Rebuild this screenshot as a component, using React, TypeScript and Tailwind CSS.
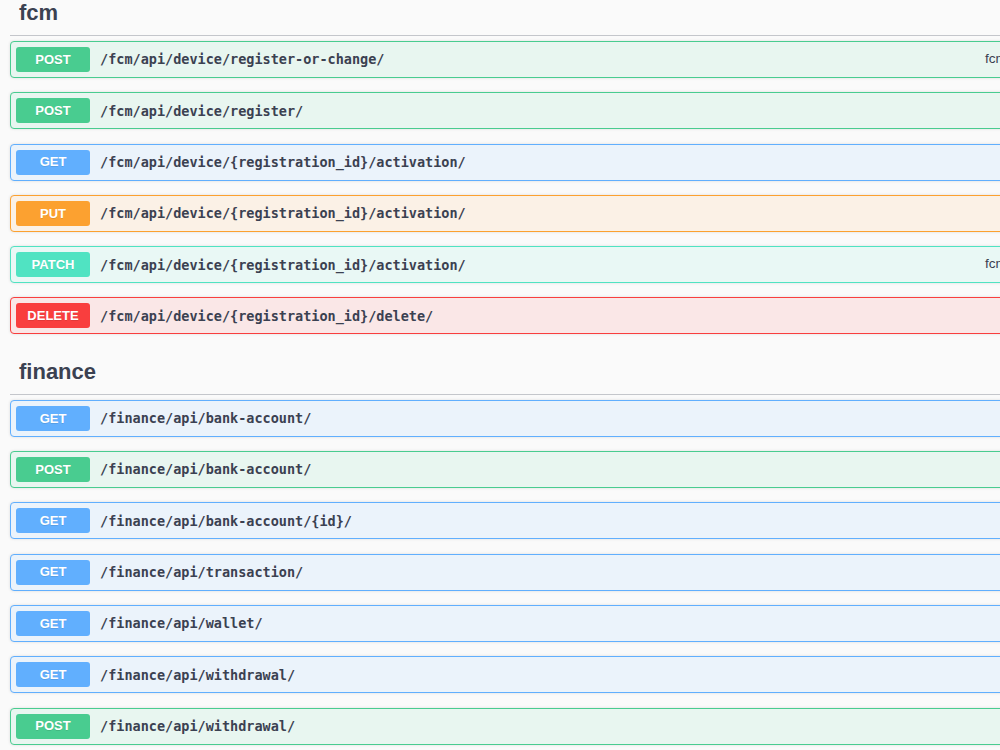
import React from "react";

type Method = "GET" | "POST" | "PUT" | "PATCH" | "DELETE";

type Op = {
  method: Method;
  path: string;
  desc?: string;
};

type Tag = {
  name: string;
  ops: Op[];
};

// swagger-ui palette, one set per method
const styles: Record<Method, { block: string; badge: string }> = {
  GET: {
    block: "border-[#61affe] bg-[#ebf3fb]",
    badge: "bg-[#61affe]",
  },
  POST: {
    block: "border-[#49cc90] bg-[#e8f6f0]",
    badge: "bg-[#49cc90]",
  },
  PUT: {
    block: "border-[#fca130] bg-[#fbf1e6]",
    badge: "bg-[#fca130]",
  },
  PATCH: {
    block: "border-[#50e3c2] bg-[#e9f8f5]",
    badge: "bg-[#50e3c2]",
  },
  DELETE: {
    block: "border-[#f93e3e] bg-[#fae7e7]",
    badge: "bg-[#f93e3e]",
  },
};

const tags: Tag[] = [
  {
    name: "fcm",
    ops: [
      { method: "POST", path: "/fcm/api/device/register-or-change/", desc: "fcm_api_device_register-or-change_create" },
      { method: "POST", path: "/fcm/api/device/register/" },
      { method: "GET", path: "/fcm/api/device/{registration_id}/activation/" },
      { method: "PUT", path: "/fcm/api/device/{registration_id}/activation/" },
      { method: "PATCH", path: "/fcm/api/device/{registration_id}/activation/", desc: "fcm_api_device_activation_partial_update" },
      { method: "DELETE", path: "/fcm/api/device/{registration_id}/delete/" },
    ],
  },
  {
    name: "finance",
    ops: [
      { method: "GET", path: "/finance/api/bank-account/" },
      { method: "POST", path: "/finance/api/bank-account/" },
      { method: "GET", path: "/finance/api/bank-account/{id}/" },
      { method: "GET", path: "/finance/api/transaction/" },
      { method: "GET", path: "/finance/api/wallet/" },
      { method: "GET", path: "/finance/api/withdrawal/" },
      { method: "POST", path: "/finance/api/withdrawal/" },
    ],
  },
];

function OpBlock({ op }: { op: Op }) {
  const s = styles[op.method];
  return (
    <div
      className={`mb-[14.3px] flex h-[37px] w-[1100px] items-center rounded-[4px] border px-[5px] shadow-[0_0_3px_rgba(0,0,0,0.12)] ${s.block}`}
    >
      <span
        className={`flex h-[25px] w-[74px] shrink-0 items-center justify-center rounded-[3px] font-['Liberation_Sans',Arial,sans-serif] text-[13px] font-bold text-white [text-shadow:0_1px_0_rgba(0,0,0,0.1)] ${s.badge}`}
      >
        {op.method}
      </span>
      <span className="ml-[10px] w-[885px] shrink-0 font-['DejaVu_Sans_Mono',monospace] text-[13.5px] font-bold text-[#3b4151]">
        {op.path}
      </span>
      {op.desc && (
        <span className="whitespace-nowrap font-['Liberation_Sans',Arial,sans-serif] text-[13.6px] text-[#3b4151]">
          {op.desc}
        </span>
      )}
    </div>
  );
}

export default function App() {
  return (
    <div className="h-[750px] w-full overflow-hidden bg-[#fafafa]">
      <div className="-mt-[10px] pl-[10px]">
        {tags.map((tag) => (
          <section key={tag.name}>
            <h3 className="mb-[5px] flex h-[46px] w-[1100px] items-center border-b border-[#c4c6cb] pl-[9px] font-['Liberation_Sans',Arial,sans-serif] text-[22px] font-bold text-[#3b4151]">
              {tag.name}
            </h3>
            {tag.ops.map((op, i) => (
              <OpBlock key={i} op={op} />
            ))}
          </section>
        ))}
      </div>
    </div>
  );
}
